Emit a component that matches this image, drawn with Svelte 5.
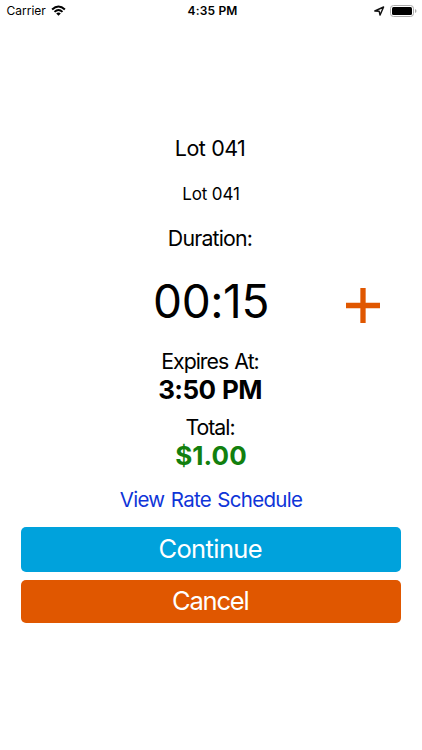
<script>
  const lot = 'Lot 041';
</script>

<main class="screen">
  <header class="status">
    <div class="carrier"><span>Carrier</span>
      <svg width="15" height="11" viewBox="0 0 15 11"><path d="M.4 3.8Q7.5-2.9 14.6 3.8L13.2 5.2Q7.5 0 1.8 5.2ZM2.8 6.2Q7.5 1.9 12.2 6.2L10.8 7.6Q7.5 4.6 4.2 7.6ZM5.2 8.5Q7.5 6.5 9.8 8.5L7.5 10.8Z"/></svg>
    </div>
    <time>4:35 PM</time>
    <div class="device">
      <svg width="11" height="10" viewBox="0 0 11 10"><path d="M.8 5 9.6 1 6 9.1 5.2 5.3Z" fill="none" stroke="#111" stroke-width="1.4" stroke-linejoin="round"/></svg>
      <svg width="27" height="12" viewBox="0 0 27 12"><rect x=".5" y=".5" width="23" height="11" rx="3" fill="none" stroke="#aaa"/><rect x="2" y="2" width="20" height="8" rx="1.5"/><path d="M25 4Q26.5 4.6 26.5 6T25 8Z" fill="#aaa"/></svg>
    </div>
  </header>
  <h1 class="title"><span>{lot}</span></h1>
  <p class="subtitle"><span>{lot}</span></p>
  <p class="duration"><span>Duration:</span></p>
  <div class="picker"><span class="time">00:15</span><button class="plus" aria-label="Increase duration"><svg width="34" height="35" viewBox="0 0 34 35"><path d="M17 0V35M0 17.5H34" stroke="#e05700" stroke-width="5.3"/></svg></button></div>
  <p class="expires"><span>Expires At:</span></p>
  <p class="expiry"><span>3:50 PM</span></p>
  <p class="total"><span>Total:</span></p>
  <p class="amount"><span>$1.00</span></p>
  <button class="rates"><span>View Rate Schedule</span></button>
  <button class="action continue"><span>Continue</span></button>
  <button class="action cancel"><span>Cancel</span></button>
</main>

<style>
  :global(body) { margin: 0; background: #fff; }
  .screen { width: 422px; height: 750px; display: flex; flex-direction: column; font-family: Inter, sans-serif; color: #000; overflow: hidden; background: #fff; }
  h1, p { margin: 0; padding-right: 2px; font-weight: 400; text-align: center; white-space: nowrap; }
  button { border: 0; margin: 0; padding: 0; background: none; font-family: inherit; }
  .status { height: 22px; display: grid; grid-template-columns: 1fr 60px 1fr; align-items: center; font-size: 12px; padding: 0 5px 0 6.5px; }
  .status time { font-weight: 600; text-align: center; white-space: nowrap; letter-spacing: .18px; padding: 0 0 1px 1.5px; }
  .carrier { display: flex; align-items: center; gap: 5px; }
  .carrier span { padding-bottom: 1px; }
  .carrier svg { margin-bottom: 1px; }
  .device { display: flex; align-items: center; justify-content: flex-end; gap: 5px; padding-bottom: 1px; }
  .title { margin-top: 112px; height: 28px; line-height: 28px; font-size: 21.5px; letter-spacing: -.6px; word-spacing: .6px; }
  .subtitle { padding-right: 0; margin-top: 20px; height: 24px; line-height: 24px; font-size: 17px; letter-spacing: -.1px; }
  .duration { margin-top: 18px; height: 28px; line-height: 28px; font-size: 21.3px; letter-spacing: -.8px; }
  .picker { height: 98px; display: grid; grid-template-columns: 1fr 140px 1fr; align-items: center; }
  .time { grid-column: 2; font-size: 46px; text-align: center; letter-spacing: -.4px; }
  .plus { justify-self: end; margin: 9px 42px 0 0; width: 34px; height: 35px; }
  .plus svg { display: block; }
  .expires { margin-top: -3px; height: 28px; line-height: 28px; font-size: 21.3px; letter-spacing: -1px; word-spacing: 1.2px; }
  .expiry { height: 30px; line-height: 30px; font-size: 26px; font-weight: 700; letter-spacing: -.6px; word-spacing: 1px; }
  .total { margin-top: 8px; height: 28px; line-height: 28px; font-size: 21.3px; letter-spacing: -1px; }
  .amount { padding-right: 0; height: 30px; line-height: 30px; font-size: 26px; font-weight: 700; color: #12800e; letter-spacing: .1px; }
  .rates { margin-top: 14px; height: 30px; line-height: 30px; font-size: 20.5px; letter-spacing: -.7px; word-spacing: 1.3px; color: #0f35d8; }
  .action { margin: 12px 21px 0 20.5px; height: 44.5px; flex-shrink: 0; padding: 0 1px 1px 0; border-radius: 5px; color: #fff; font-size: 25.5px; letter-spacing: -.6px; }
  .continue { background: #00a2dc; }
  .cancel { margin-top: 8.5px; height: 42.5px; background: #e05700; letter-spacing: -1.2px; }
</style>
